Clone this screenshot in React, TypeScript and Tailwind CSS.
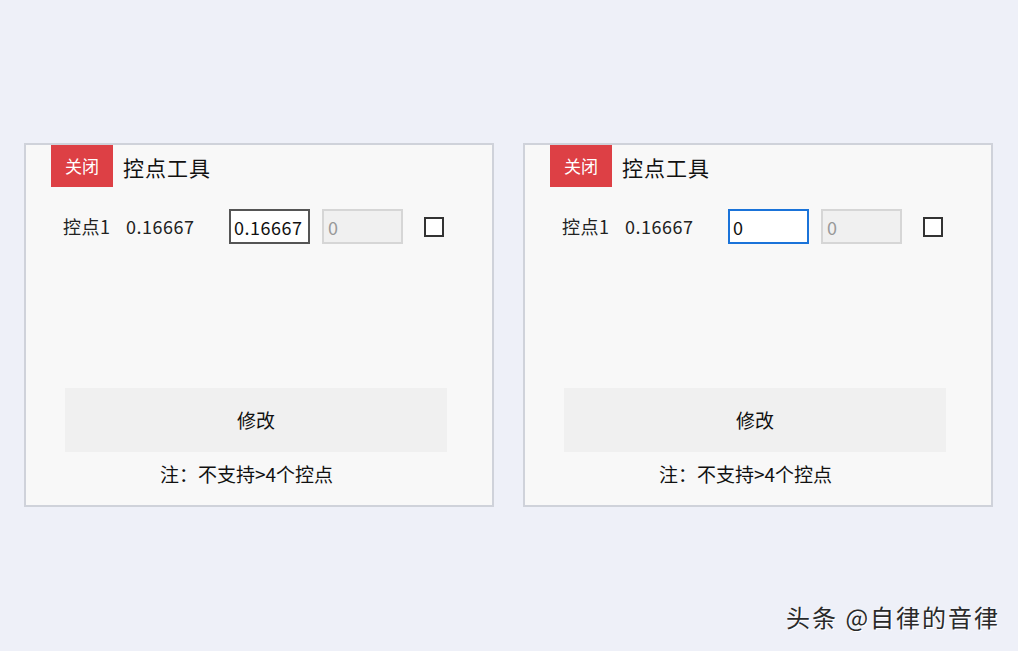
import React from 'react';

const FONT = { fontFamily: '"Noto Sans CJK SC", "Noto Sans", sans-serif' };

interface PanelProps {
  value: string;
  focused?: boolean;
}

const Panel: React.FC<PanelProps> = ({ value, focused = false }) => {
  return (
    <div className="w-[470px] h-[364px] border-2 border-[#cfd2da] bg-[#f8f8f8] flex flex-col">
      {/* Header */}
      <div className="flex items-center pl-[25px]">
        <button className="w-[62px] h-[42px] bg-[#dd4045] text-white text-[17px] flex items-center justify-center">
          关闭
        </button>
        <span className="ml-[10px] text-[21px] tracking-[1px] text-[#111] mt-[3px]">控点工具</span>
      </div>

      {/* Control point row */}
      <div className="flex items-center mt-[22px] pl-[37px] h-[35px] text-[18px] text-[#222]">
        <span className="w-[63px] tracking-[0.5px]">控点1</span>
        <span className="w-[103px] tracking-[0.5px]">0.16667</span>
        <input
          readOnly
          value={value}
          className={
            focused
              ? 'w-[81px] h-[35px] bg-white border-2 border-[#1a73d9] px-[3px] text-[18px] tracking-[0.5px] text-[#111] outline-none'
              : 'w-[81px] h-[35px] bg-white border-2 border-[#555] px-[3px] text-[18px] tracking-[0.5px] text-[#111] outline-none'
          }
          style={FONT}
        />
        <input
          readOnly
          value="0"
          className="ml-[12px] w-[81px] h-[35px] bg-[#f0f0f0] border-2 border-[#d6d6d6] px-[4px] text-[18px] text-[#999] outline-none"
          style={FONT}
        />
        <span className="ml-[21px] w-[20px] h-[20px] border-2 border-[#333] bg-white" />
      </div>

      <div className="flex-1" />

      {/* Modify button */}
      <div className="pl-[39px]">
        <button className="w-[382px] h-[64px] bg-[#f0f0f0] text-[19px] text-[#111]">修改</button>
      </div>
      <div className="pl-[134px] text-[19px] text-[#111] mt-[8px] mb-[17px] leading-[28px]">
        注：不支持&gt;4个控点
      </div>
    </div>
  );
};

export default function App() {
  return (
    <div className="relative w-[1018px] h-[651px] bg-[#eef0f8] overflow-hidden" style={FONT}>
      <div className="flex gap-[29px] pl-[24px] pt-[143px]">
        <Panel value="0.16667" />
        <Panel value="0" focused />
      </div>
      <div
        className="absolute left-[786px] top-[600px] text-[24px] tracking-[2px] text-[#2a2a2a] leading-[34px]"
        style={{ textShadow: '1px 1px 0 #ffffff' }}
      >
        头条 @自律的音律
      </div>
    </div>
  );
}
